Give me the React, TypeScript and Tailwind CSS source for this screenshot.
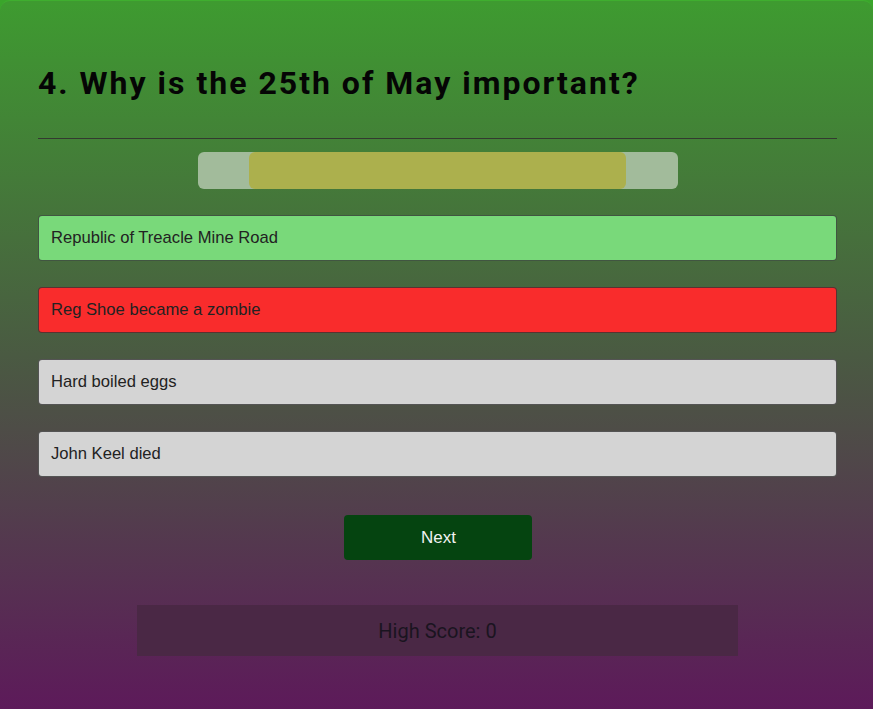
import React from "react";

const answers = [
  { text: "Republic of Treacle Mine Road", style: "bg-[#79d97a]" },
  { text: "Reg Shoe became a zombie", style: "bg-[#f92c2c]" },
  { text: "Hard boiled eggs", style: "bg-[#d4d4d4]" },
  { text: "John Keel died", style: "bg-[#d4d4d4]" },
];

export default function App() {
  return (
    <div className="w-[873px] h-[709px] bg-[#3aa52b] overflow-hidden">
      <div className="h-full rounded-t-[10px] border-t border-[#3fae2f] bg-[linear-gradient(to_bottom,#3e9b30_0%,#4a5a42_50%,#5d1a5a_100%)] pl-[38px] pr-[36px] pt-[63px]">
        <h1 className="font-['Roboto',sans-serif] font-bold text-[32px] leading-[38px] tracking-[2px] text-[#050505]">
          4. Why is the 25th of May important?
        </h1>
        <div className="mt-[36px] h-[1px] bg-[#333a30]" />

        <div className="mt-[13px] flex justify-center">
          <div className="w-[480px] h-[37px] rounded-[6px] bg-[#a2bb9b] flex justify-center">
            <div className="w-[377px] h-full rounded-[6px] bg-[#acb04d]" />
          </div>
        </div>

        <div className="mt-[26px] flex flex-col gap-[26px]">
          {answers.map((a) => (
            <div
              key={a.text}
              className={`${a.style} h-[46px] rounded-[4px] border border-[#333]/80 flex items-center pl-[12px] font-['Liberation_Sans',Arial,sans-serif] text-[16.6px] text-[#222]`}
            >
              {a.text}
            </div>
          ))}
        </div>

        <div className="mt-[38px] flex justify-center">
          <button className="w-[188px] h-[45px] rounded-[4px] bg-[#054410] text-[#f2f2f2] font-['Liberation_Sans',Arial,sans-serif] text-[17px] pl-[2px]">
            Next
          </button>
        </div>

        <div className="mt-[45px] flex justify-center">
          <div className="w-[601px] h-[51px] bg-[#4a2845] flex items-center justify-center font-['Roboto',sans-serif] text-[20px] text-[#1a1420]">
            High Score: 0
          </div>
        </div>
      </div>
    </div>
  );
}
